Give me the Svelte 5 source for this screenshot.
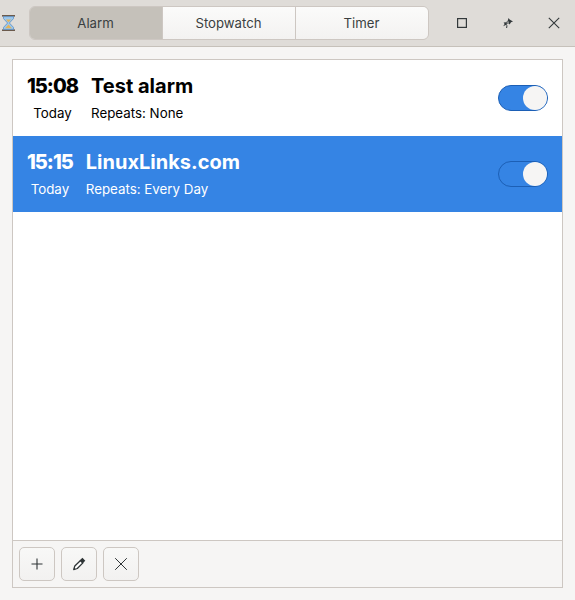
<script>
	let tabs = ['Alarm', 'Stopwatch', 'Timer'];
	let alarms = [
		{ time: '15:08', day: 'Today', name: 'Test alarm', repeats: 'Repeats: None', selected: false },
		{ time: '15:15', day: 'Today', name: 'LinuxLinks.com', repeats: 'Repeats: Every Day', selected: true }
	];
</script>

<div class="window">
	<header>
		<svg class="app-icon" width="13" height="16" viewBox="0 0 13 16">
			<rect x="0" y="0" width="13" height="1.6" fill="#6b5a4c" />
			<rect x="0" y="14.4" width="13" height="1.6" fill="#6b5a4c" />
			<path d="M1.5 1.6h10v2L7.4 8l4.1 4.4v2h-10v-2L5.6 8 1.5 3.6z" fill="#9cc8ee" stroke="#4f86c0" stroke-width="0.7" />
			<path d="M3.8 4.4h5.4L6.5 7.2z" fill="#e2b35a" />
			<path d="M6.5 9.6l3.4 3.6H3.1z" fill="#e2b35a" />
		</svg>
		<div class="tabs">
			{#each tabs as tab, i}
				<button class="tab" class:active={i === 0}>{tab}</button>
			{/each}
		</div>
		<div class="controls">
			<button class="ctl" aria-label="Maximize">
				<svg width="12" height="12" viewBox="0 0 12 12"><rect x="1.6" y="1.6" width="8.8" height="8.8" fill="none" stroke="#33393b" stroke-width="1.2" /></svg>
			</button>
			<button class="ctl" aria-label="Pin">
				<svg width="12" height="12" viewBox="0 0 12 12"><path d="M6.6 1l1 1.6L11 4.4 9 5.2 7.6 7.4 6.4 6 4.6 7.4l.2 1.4-1-.8-2.6 1.2L2.6 7 1.6 5.6l2.6-.4L5.6 4z" fill="#33393b" /><rect x="4.6" y="4.4" width="2.4" height="2.4" fill="#8a8d8c" /><path d="M5 8.4l-.4 2.6" stroke="#33393b" stroke-width="1" /></svg>
			</button>
			<button class="ctl" aria-label="Close">
				<svg width="12" height="12" viewBox="0 0 12 12"><path d="M.8.8l10.4 10.4M11.2.8L.8 11.2" stroke="#33393b" stroke-width="1.1" fill="none" /></svg>
			</button>
		</div>
	</header>

	<main>
		<div class="frame">
			<div class="list">
				{#each alarms as a}
					<div class="row" class:selected={a.selected}>
						<div class="when">
							<div class="time">{a.time}</div>
							<div class="day">{a.day}</div>
						</div>
						<div class="what">
							<div class="name">{a.name}</div>
							<div class="repeats">{a.repeats}</div>
						</div>
						<div class="switch"><span class="knob"></span></div>
					</div>
				{/each}
			</div>
			<div class="toolbar">
				<button class="tool" aria-label="Add">
					<svg width="14" height="14" viewBox="0 0 14 14"><path d="M7 1.5v11M1.5 7h11" stroke="#2e3436" stroke-width="1.1" fill="none" /></svg>
				</button>
				<button class="tool" aria-label="Edit">
					<svg width="14" height="14" viewBox="0 0 14 14"><path d="M8.5 3.5l2.4 2.4-5.6 5.6-3.6 1.1 1.1-3.6z" fill="#fff" stroke="#2e3436" stroke-width="1.3" stroke-linejoin="round" /><path d="M7.6 3.6l2.9 2.9 2.8-2.8-2.9-2.9z" fill="#2e3436" /></svg>
				</button>
				<button class="tool" aria-label="Remove">
					<svg width="14" height="14" viewBox="0 0 14 14"><path d="M1.2 1.2l11.6 11.6M12.8 1.2L1.2 12.8" stroke="#2e3436" stroke-width="1" fill="none" /></svg>
				</button>
			</div>
		</div>
	</main>
</div>

<style>
	:global(body) {
		margin: 0;
		background: #f6f5f4;
	}
	.window {
		width: 575px;
		height: 600px;
		display: flex;
		flex-direction: column;
		font-family: Inter, "Noto Sans", sans-serif;
		color: #2e3436;
	}
	header {
		height: 46px;
		flex: none;
		display: flex;
		align-items: center;
		background: #dfdcd8;
		border-bottom: 1px solid #c6c1ba;
	}
	.app-icon {
		margin-left: 2px;
		flex: none;
	}
	.tabs {
		display: flex;
		flex: none;
		margin-left: 14px;
		width: 400px;
		height: 34px;
		border: 1px solid #cdc7c2;
		border-radius: 6px;
		overflow: hidden;
		box-sizing: border-box;
	}
	.tab {
		flex: 1;
		border: none;
		border-left: 1px solid #cdc7c2;
		background: linear-gradient(#fbfbfa, #f3f2f1);
		font: inherit;
		font-size: 13.2px;
		color: #3a3f41;
		padding: 0 1px 0 0;
	}
	.tab:first-child {
		border-left: none;
	}
	.tab.active {
		background: #c5c1ba;
	}
	.controls {
		margin-left: 16px;
		display: flex;
		flex: none;
		gap: 12px;
	}
	.ctl {
		width: 34px;
		height: 32px;
		border: none;
		background: none;
		padding: 0;
		display: flex;
		align-items: center;
		justify-content: center;
	}
	main {
		flex: 1;
		padding: 12px;
		min-height: 0;
		display: flex;
	}
	.frame {
		flex: 1;
		display: flex;
		flex-direction: column;
		border: 1px solid #cdc7c2;
	}
	.list {
		flex: 1;
		background: #fff;
		border-bottom: 1px solid #cdc7c2;
	}
	.row {
		height: 76px;
		display: flex;
		align-items: center;
		padding: 0 14px;
		color: #000;
	}
	.row.selected {
		background: #3584e4;
		color: #fff;
	}
	.when {
		display: flex;
		flex-direction: column;
		align-items: center;
		padding-bottom: 2px;
	}
	.time {
		font-size: 20px;
		font-weight: 800;
		line-height: 24px;
		letter-spacing: -1px;
	}
	.day,
	.repeats {
		font-size: 13.33px;
		line-height: 16px;
		margin-top: 7px;
	}
	.what {
		flex: 1;
		margin-left: 13px;
		padding-bottom: 2px;
	}
	.name {
		font-size: 20px;
		font-weight: 700;
		line-height: 24px;
	}
	.switch {
		width: 50px;
		height: 26px;
		box-sizing: border-box;
		border: 1px solid #1c5fb5;
		border-radius: 13px;
		background: #3584e4;
		position: relative;
	}
	.knob {
		position: absolute;
		right: 0;
		top: 0;
		width: 24px;
		height: 24px;
		border-radius: 50%;
		background: #f6f5f4;
	}
	.toolbar {
		height: 46px;
		flex: none;
		display: flex;
		align-items: center;
		gap: 6px;
		padding-left: 6px;
		background: #f6f5f4;
	}
	.tool {
		width: 36px;
		height: 34px;
		box-sizing: border-box;
		border: 1px solid #cdc7c2;
		border-radius: 5px;
		background: linear-gradient(#f8f8f7, #f2f1f0);
		padding: 0;
		display: flex;
		align-items: center;
		justify-content: center;
	}
</style>
